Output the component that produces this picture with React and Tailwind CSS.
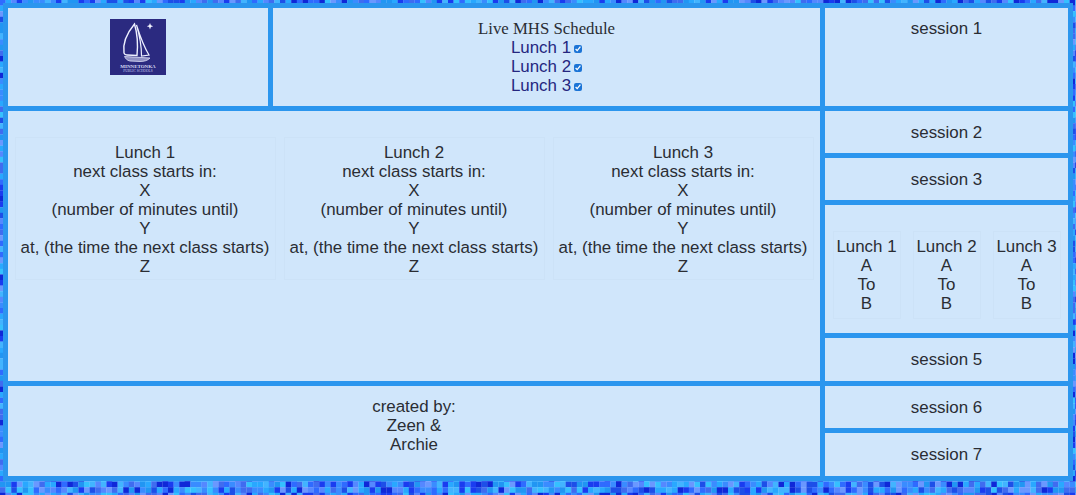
import { useMemo } from 'react';

const BLUES = ['#1a3cf0', '#2f6bff', '#3a8cff', '#29a8ff', '#35c0ff', '#5588ff', '#0f28d8', '#3f6cf0', '#2196f3', '#6a98ff', '#1d4fe8', '#42b4ff'];
const TILE = 5.6;

// small seeded generator so the tiles come out the same on every render
function makeTiles() {
    let seed = 20240;
    const next = () => {
        seed = (seed * 16807) % 2147483647;
        return seed / 2147483647;
    };
    const tiles = [];
    for (let y = 0; y < 90; y++) {
        for (let x = 0; x < 194; x++) {
            tiles.push({ x: x * TILE, y: y * TILE, fill: BLUES[Math.floor(next() * BLUES.length)] });
        }
    }
    return tiles;
}

function Mosaic() {
    const tiles = useMemo(makeTiles, []);
    return (
        <svg className="absolute inset-0 w-[1076px] h-[495px] blur-[0.5px]" viewBox="0 0 1076 495" aria-hidden="true">
            {tiles.map((t) => (
                <rect key={`${t.x}-${t.y}`} x={t.x} y={t.y} width={TILE + 0.2} height={TILE + 0.2} fill={t.fill} />
            ))}
        </svg>
    );
}

function Logo() {
    return (
        <svg className="w-[56px] h-[56px] block mx-auto" viewBox="0 0 56 56">
            <rect width="56" height="56" fill="#2b2a80" />
            <path d="M24.500 5 C17 14 12.500 24 14 34 C14.500 35.500 15.500 36 17 36 L27 36.500 C28 26 27.500 15 24.500 5 Z" fill="none" stroke="#eef0ff" strokeWidth="1.400" />
            <path d="M26.500 6 C30 17 34 28 39 36 L31.500 37 C31.500 27 29.500 16 26.500 6 Z" fill="none" stroke="#eef0ff" strokeWidth="1.200" />
            <path d="M14.500 37.500 L40 39 C38 41.500 34 42.500 30 42.500 L20 42 C17 41.500 15.500 39.500 14.500 37.500 Z" fill="#8f90c4" stroke="#dfe2f8" strokeWidth="0.800" />
            <path d="M40 4 l0.900 2.300 2.300 0.900 -2.300 0.900 -0.900 2.300 -0.900 -2.300 -2.300 -0.900 2.300 -0.900 Z" fill="#f4f5ff" />
            <text x="28" y="48.500" textAnchor="middle" fontSize="5" fontFamily="'Liberation Serif', serif" fontWeight="700" fill="#d8dcf4">MINNETONKA</text>
            <text x="28" y="53" textAnchor="middle" fontSize="3.500" fontFamily="'Liberation Serif', serif" fill="#c8cdee">PUBLIC SCHOOLS</text>
        </svg>
    );
}

function Session({ label, className }) {
    return <div className={`bg-[#d0e6fb] text-center ${className}`}>{label}</div>;
}

function LunchLink({ label }) {
    return (
        <div className="flex items-center justify-center text-[#25267f]">
            {label}
            <input type="checkbox" defaultChecked className="w-[8px] h-[8px] ml-[3px] mt-[2px] accent-[#1b74d6]" />
        </div>
    );
}

function NextClass({ label }) {
    return (
        <div className="w-[261px] h-[143px] py-[5px] border border-[#cce2f7] text-center">
            <div>{label}</div>
            <div>next class starts in:</div>
            <div>X</div>
            <div>(number of minutes until)</div>
            <div>Y</div>
            <div>at, (the time the next class starts)</div>
            <div>Z</div>
        </div>
    );
}

function LunchRange({ label }) {
    return (
        <div className="w-[68px] h-[88px] py-[5px] border border-[#cce2f7] text-center">
            <div>{label}</div>
            <div>A</div>
            <div>To</div>
            <div>B</div>
        </div>
    );
}

export default function App() {
    return (
        <div className="relative w-[1076px] h-[495px] overflow-hidden font-['Liberation_Sans',Arial,sans-serif] text-[16.900px] leading-[19px] text-[#2a2d33]">
            <Mosaic />
            <div className="relative mt-[3px] ml-[3px] w-[1070px] h-[478px] p-[5px] flex gap-[5px] bg-[#2b96ee]">
                <div className="w-[812px] flex flex-col gap-[5px]">
                    <div className="h-[98px] flex gap-[5px]">
                        <div className="w-[260px] bg-[#d0e6fb] pt-[11px]">
                            <Logo />
                        </div>
                        <div className="flex-1 bg-[#d0e6fb] pt-[11px] text-center">
                            <div className="font-['Liberation_Serif',serif] text-[16.800px]">Live MHS Schedule</div>
                            <LunchLink label="Lunch 1" />
                            <LunchLink label="Lunch 2" />
                            <LunchLink label="Lunch 3" />
                        </div>
                    </div>
                    <div className="h-[270px] bg-[#d0e6fb] pt-[26px] flex justify-center items-start gap-[8px]">
                        <NextClass label="Lunch 1" />
                        <NextClass label="Lunch 2" />
                        <NextClass label="Lunch 3" />
                    </div>
                    <div className="h-[90px] bg-[#d0e6fb] pt-[11px] text-center">
                        <div>created by:</div>
                        <div>Zeen &amp;</div>
                        <div>Archie</div>
                    </div>
                </div>
                <div className="w-[243px] flex flex-col gap-[5px]">
                    <Session label="session 1" className="h-[98px] pt-[11px]" />
                    <Session label="session 2" className="h-[42px] pt-[12px]" />
                    <Session label="session 3" className="h-[42px] pt-[12px]" />
                    <div className="h-[128px] bg-[#d0e6fb] pt-[26px] flex justify-center items-start gap-[12px]">
                        <LunchRange label="Lunch 1" />
                        <LunchRange label="Lunch 2" />
                        <LunchRange label="Lunch 3" />
                    </div>
                    <Session label="session 5" className="h-[43px] pt-[12px]" />
                    <Session label="session 6" className="h-[42px] pt-[12px]" />
                    <Session label="session 7" className="h-[43px] pt-[12px]" />
                </div>
            </div>
        </div>
    );
}
